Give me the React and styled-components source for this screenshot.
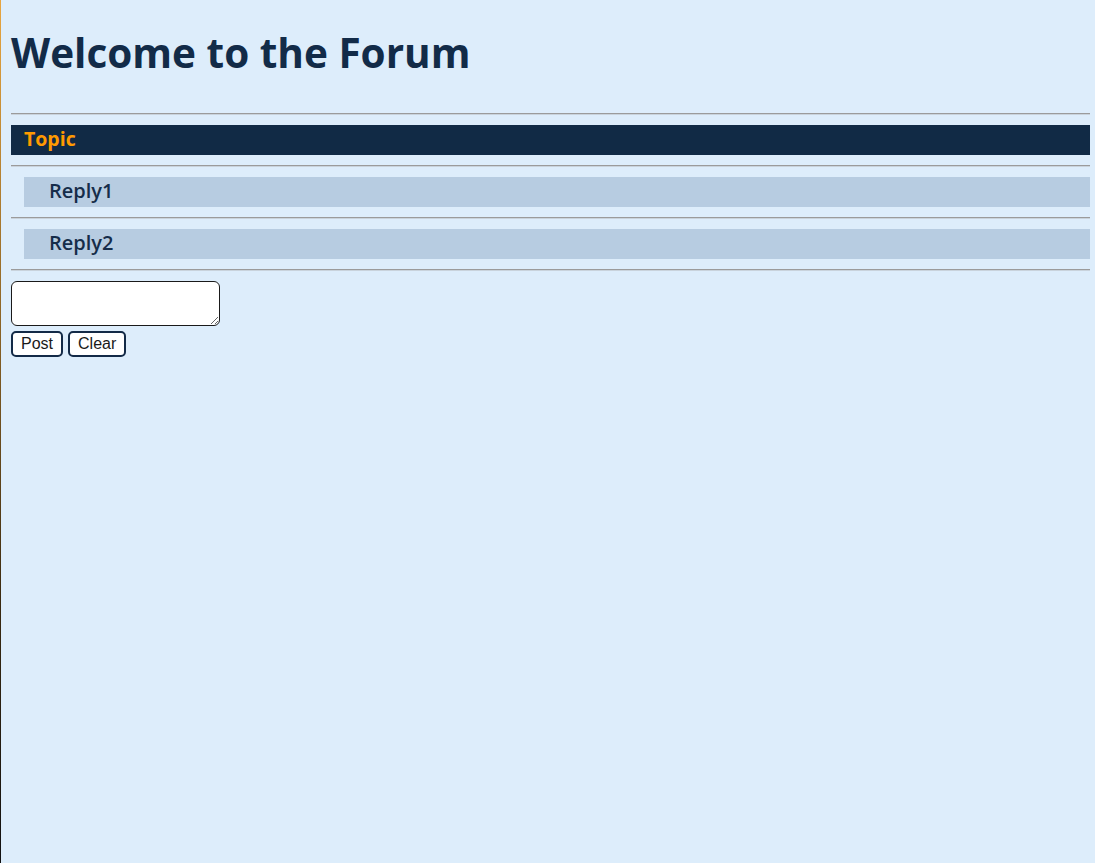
import React from "react";
import styled, { createGlobalStyle } from "styled-components";

const Global = createGlobalStyle`
  html, body { margin: 0; padding: 0; }
  html { background: #ddedfb; }
  body {
    min-height: 100vh;
    box-sizing: border-box;
    border-left: 1px solid transparent;
    border-image: linear-gradient(to bottom, #e8a640, #3a2a10 70%, #111 100%) 1;
    background: #ddedfb;
    font-family: "Open Sans", sans-serif;
  }
`;

const Page = styled.div`
  padding: 0 5px 0 10px;
`;

const Title = styled.h1`
  margin: 25px 0 33px;
  font-family: "Open Sans", sans-serif;
  font-weight: 700;
  font-size: 40.5px;
  color: #122b48;
`;

const Rule = styled.hr`
  margin: 10px 0;
  border: none;
  border-top: 1px solid #9b9b9b;
  border-bottom: 1px solid #c9d3dc;
  height: 0;
`;

const Topic = styled.div`
  box-sizing: border-box;
  height: 30px;
  line-height: 28px;
  padding-left: 13px;
  background: #112a45;
  color: #ff9a00;
  font-weight: 700;
  font-size: 19.5px;
`;

const Reply = styled.div`
  box-sizing: border-box;
  height: 30px;
  line-height: 28px;
  margin-left: 13px;
  padding-left: 25px;
  background: #b7cce1;
  color: #162d4a;
  font-weight: 600;
  font-size: 20px;
`;

const Box = styled.textarea`
  display: block;
  box-sizing: border-box;
  width: 209px;
  height: 45px;
  margin: 0 0 5px;
  border: 1px solid #1a1a1a;
  border-radius: 6px;
  background: #fff;
`;

const Buttons = styled.div`
  display: flex;
  gap: 5px;
`;

const Button = styled.button`
  box-sizing: border-box;
  height: 26px;
  padding: 0 8px;
  border: 2px solid #132a47;
  border-radius: 5px;
  background: #fff;
  color: #1a1a1a;
  font-family: "Liberation Sans", Arial, sans-serif;
  font-size: 16px;
  cursor: pointer;
`;

export default function App() {
  return (
    <>
      <Global />
      <Page>
        <Title>Welcome to the Forum</Title>
        <Rule />
        <Topic>Topic</Topic>
        <Rule />
        <Reply>Reply1</Reply>
        <Rule />
        <Reply>Reply2</Reply>
        <Rule />
        <Box />
        <Buttons>
          <Button>Post</Button>
          <Button>Clear</Button>
        </Buttons>
      </Page>
    </>
  );
}
